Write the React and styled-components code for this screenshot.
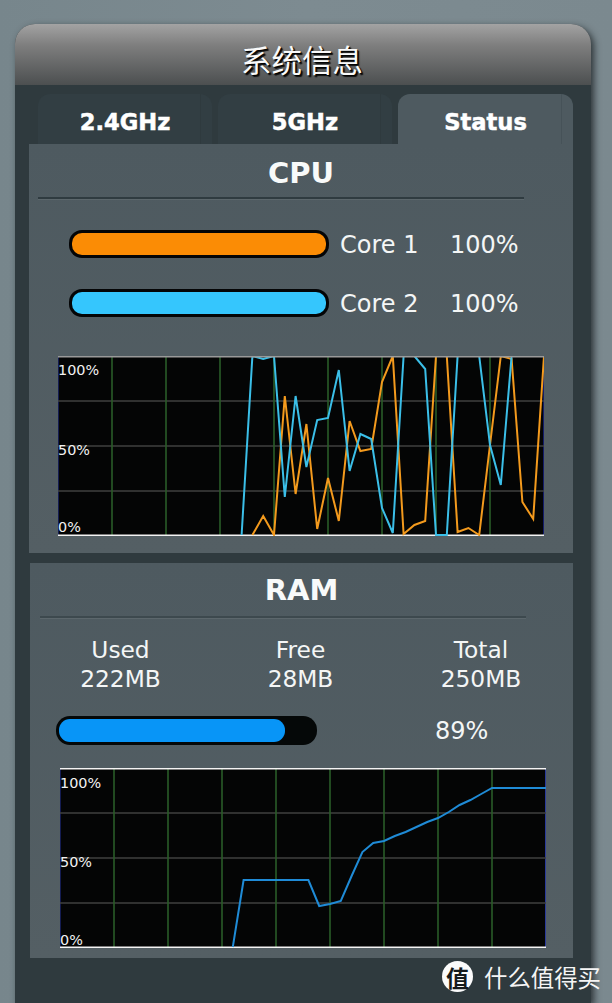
import React from "react";
import styled, { createGlobalStyle } from "styled-components";

const GlobalStyle = createGlobalStyle`
  html, body { margin: 0; padding: 0; height: 1003px; overflow: hidden; background: #7c8a90; }
  * { box-sizing: border-box; }
`;

const Page = styled.div`
  position: relative;
  width: 612px;
  height: 1003px;
  padding: 24px 21px 0 15px;
  overflow: hidden;
  font-family: "DejaVu Sans", Verdana, sans-serif;
  color: #f4f6f6;
  background: linear-gradient(90deg, #77868c 0%, #7d8b91 50%, #7b898f 100%);
`;

const Panel = styled.main`
  height: 979px;
  border-radius: 20px 20px 0 0;
  background: #2f3a3e;
  box-shadow: 3px 3px 7px rgba(20, 26, 28, 0.75);
`;

const Header = styled.header`
  height: 61px;
  padding: 8px 2px 0 0;
  border-radius: 20px 20px 0 0;
  display: flex;
  align-items: center;
  justify-content: center;
  background: linear-gradient(180deg, #a3a3a3 0%, #7e7e7e 35%, #4c4f50 100%);
  font-family: "Noto Sans CJK SC", sans-serif;
  font-size: 30.5px;
  color: #fafafa;
  text-shadow: 1px 1px 1px #000, 2px 2px 1px #111;
`;

const Tabs = styled.nav`
  display: flex;
  gap: 6px;
  margin: 9px 0 0 23px;
  height: 50px;
`;

const Tab = styled.div`
  position: relative;
  width: ${(p) => p.$w}px;
  padding-top: 6px;
  display: flex;
  align-items: center;
  justify-content: center;
  border-radius: 12px 12px 0 0;
  background: ${(p) => (p.$active ? "#4e5a60" : "#323e43")};
  font-size: 22.6px;
  font-weight: 700;
  -webkit-text-stroke: 0.5px #fff;
  color: #fff;
  &::after {
    content: "";
    position: absolute;
    top: 0;
    bottom: 0;
    right: 11px;
    width: 1px;
    background: ${(p) => (p.$active ? "#465258" : "#2f3a3e")};
  }
`;

const Card = styled.section`
  margin-left: ${(p) => p.$left}px;
  width: ${(p) => p.$w}px;
  height: ${(p) => p.$h}px;
  margin-top: ${(p) => p.$top || 0}px;
  background: linear-gradient(180deg, #4e5a60 0%, #545f64 100%);
  display: flex;
  flex-direction: column;
`;

const Title = styled.h2`
  margin: 0;
  height: 53px;
  padding-top: ${(p) => p.$pad}px;
  display: flex;
  align-items: center;
  justify-content: center;
  font-size: 29px;
  font-weight: 700;
  color: #f8fafa;
`;

const Divider = styled.div`
  width: 486px;
  height: 2px;
  margin-left: ${(p) => p.$left}px;
  background: ${(p) => p.$color};
  box-shadow: 0 1px 0 #5c676c;
`;

const CoreList = styled.div`
  display: flex;
  flex-direction: column;
  gap: 31px;
  margin: 31px 0 0 40px;
`;

const CoreRow = styled.div`
  display: flex;
  align-items: center;
  height: 28px;
  font-size: 24px;
`;

const Pill = styled.div`
  width: 260px;
  height: 28px;
  padding: 3px;
  border-radius: 13px;
  background: #040506;
`;

const PillFill = styled.div`
  height: 100%;
  border-radius: 10px;
  background: ${(p) => p.$color};
`;

const CoreName = styled.span`
  width: 110px;
  margin-left: 11px;
  padding-top: 2px;
`;

const CorePercent = styled.span`
  padding-top: 2px;
`;

const ChartBox = styled.div`
  margin: ${(p) => p.$top}px 0 0 ${(p) => p.$left}px;
  width: 486px;
  height: 180px;
  line-height: 0;
`;

const Stats = styled.div`
  display: grid;
  grid-template-columns: 181px 179px 182px;
  margin-top: 17px;
  font-size: 23.3px;
  line-height: 29px;
  text-align: center;
`;

const Stat = styled.div`
  display: flex;
  flex-direction: column;
`;

const RamRow = styled.div`
  display: flex;
  align-items: center;
  margin: 23px 0 0 26px;
  font-size: 24px;
`;

const RamTrack = styled.div`
  width: 261px;
  height: 29px;
  padding: 3px 32px 3px 3px;
  border-radius: 14px;
  background: #050808;
`;

const RamFill = styled.div`
  height: 100%;
  border-radius: 11px;
  background: #0895f7;
`;

const RamPercent = styled.span`
  margin-left: 118px;
`;

const Watermark = styled.div`
  position: absolute;
  left: 442px;
  top: 961px;
  display: flex;
  align-items: center;
  gap: 11px;
  font-family: "Noto Sans CJK SC", sans-serif;
  font-size: 23.4px;
  line-height: 30px;
  color: #f5f5f5;
  white-space: nowrap;
`;

const WatermarkBadge = styled.span`
  width: 31px;
  height: 31px;
  border-radius: 50%;
  background: #fbfbfb;
  color: #161a1c;
  font-size: 23px;
  font-weight: 700;
  display: flex;
  align-items: center;
  justify-content: center;
`;

const cpu1 = [[17,179],[18,0],[19,3],[20,0],[21,141],[22,40],[23,111],[24,64],[25,62],[26,14],[27,115],[28,78],[29,83],[30,152],[31,177],[32,0],[33,0],[34,13],[35,179],[36,179],[37,0],[38,0],[39,0],[40,89],[41,129],[42,0],[43,-2],[45,-2]];
const cpu0 = [[18,179],[19,160],[20,179],[21,40],[22,138],[23,68],[24,173],[25,122],[26,165],[27,65],[28,95],[29,93],[30,26],[31,0],[32,178],[33,169],[34,165],[35,0],[36,0],[37,176],[38,172],[39,179],[40,89],[41,0],[42,3],[43,146],[44,163],[45,0]];
const ram = [[16,179],[17,112],[23,112],[24,138],[25,136],[26,133],[27,108],[28,84],[29,75],[30,73],[31,68],[32,64],[33,59],[34,54],[35,50],[36,44],[37,37],[38,32],[39,26],[40,20],[45,20]];

const pts = (s) => s.map(([i, y]) => `${(i * 10.8).toFixed(1)},${y}`).join(" ");

function Chart({ series, top, left, topColor, edge, labelShift }) {
  return (
    <ChartBox $top={top} $left={left}>
      <svg width="486" height="180" viewBox="0 0 486 180" style={{ display: "block" }}>
        <rect width="486" height="180" fill="#040505" />
        <rect x="0" width="1" height="180" fill="#141c52" />
        <rect x="485" width="1" height="180" fill={edge} />
        {[45, 90, 135].map((y) => (
          <line key={y} x1="0" x2="486" y1={y} y2={y} stroke="#3f413f" strokeWidth="1.6" />
        ))}
        {[54, 108, 162, 216, 270, 324, 378, 432].map((x) => (
          <line key={x} x1={x} x2={x} y1="0" y2="180" stroke="#2a5c28" strokeWidth="1.6" />
        ))}
        <rect y="178.5" width="486" height="1.5" fill="#f4f4f4" />
        <g fill="none" strokeWidth="2" strokeLinejoin="miter">
          {series.map((s) => (
            <polyline key={s.color} points={pts(s.points)} stroke={s.color} />
          ))}
        </g>
        <rect width="486" height="1.5" fill={topColor} />
        <g fill="#f2f2f2" fontFamily="DejaVu Sans, sans-serif" fontSize="14.4">
          <text x="0" y={19 + labelShift}>100%</text>
          <text x="0" y="99">50%</text>
          <text x="0" y={176 + labelShift}>0%</text>
        </g>
      </svg>
    </ChartBox>
  );
}

export default function App() {
  return (
    <Page>
      <GlobalStyle />
      <Panel>
        <Header>系统信息</Header>
        <Tabs>
          <Tab $w={174}>2.4GHz</Tab>
          <Tab $w={174}>5GHz</Tab>
          <Tab $w={175} $active>Status</Tab>
        </Tabs>
        <Card $left={14} $w={544} $h={409}>
          <Title $pad={5}>CPU</Title>
          <Divider $left={9} $color="#2f3b40" />
          <CoreList>
            <CoreRow>
              <Pill><PillFill $color="#fb8c05" /></Pill>
              <CoreName>Core 1</CoreName>
              <CorePercent>100%</CorePercent>
            </CoreRow>
            <CoreRow>
              <Pill><PillFill $color="#35c6fd" /></Pill>
              <CoreName>Core 2</CoreName>
              <CorePercent>100%</CorePercent>
            </CoreRow>
          </CoreList>
          <Chart
            top={39}
            left={29}
            topColor="#9a9a9a"
            edge="#141c6a"
            labelShift={0}
            series={[
              { color: "#f39a1d", points: cpu0 },
              { color: "#3bbfe8", points: cpu1 },
            ]}
          />
        </Card>
        <Card $left={15} $w={543} $h={395} $top={10}>
          <Title $pad={1}>RAM</Title>
          <Divider $left={10} $color="#3d494e" />
          <Stats>
            <Stat><span>Used</span><span>222MB</span></Stat>
            <Stat><span>Free</span><span>28MB</span></Stat>
            <Stat><span>Total</span><span>250MB</span></Stat>
          </Stats>
          <RamRow>
            <RamTrack><RamFill /></RamTrack>
            <RamPercent>89%</RamPercent>
          </RamRow>
          <Chart
            top={23}
            left={30}
            topColor="#f4f4f4"
            edge="#2a3a9a"
            labelShift={1}
            series={[{ color: "#1f8bd6", points: ram }]}
          />
        </Card>
      </Panel>
      <Watermark>
        <WatermarkBadge>值</WatermarkBadge>
        <span>什么值得买</span>
      </Watermark>
    </Page>
  );
}
